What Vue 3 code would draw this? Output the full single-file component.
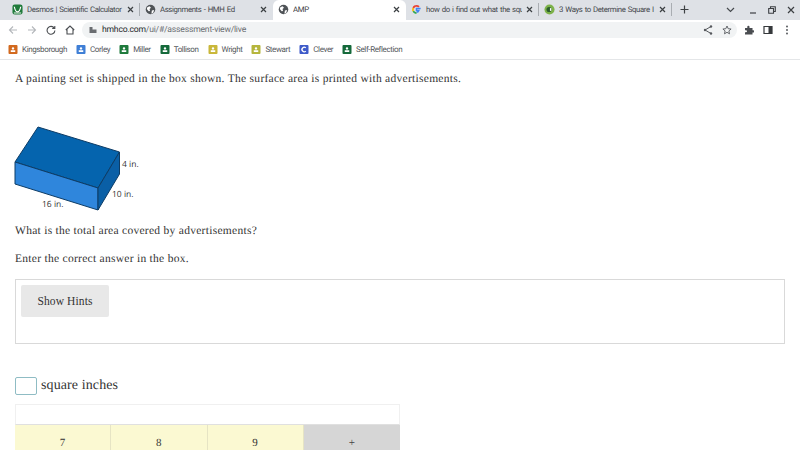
<script setup>
const tabs = [
  { title: 'Desmos | Scientific Calculator', icon: 'desmos', sep: true },
  { title: 'Assignments - HMH Ed', icon: 'globe' },
  { title: 'AMP', icon: 'globe', active: true },
  { title: 'how do i find out what the squ', icon: 'google', sep: true },
  { title: '3 Ways to Determine Square I', icon: 'ways', sep: true },
]

const bookmarks = [
  { name: 'Kingsborough', color: '#d2691e' },
  { name: 'Corley', color: '#3f7fd6' },
  { name: 'Miller', color: '#1e7a3c' },
  { name: 'Tollison', color: '#14693a' },
  { name: 'Wright', color: '#c9b73a' },
  { name: 'Stewart', color: '#b5b53c' },
  { name: 'Clever', color: '#3f5bc9', letter: 'C' },
  { name: 'Self-Reflection', color: '#14693a' },
]

const keys = [
  { label: '7' },
  { label: '8' },
  { label: '9' },
  { label: '+', op: true },
]
</script>

<template>
  <div class="page">
    <div class="tabstrip">
      <div v-for="tab in tabs" :key="tab.title" class="tab" :class="{ active: tab.active, sep: tab.sep }">
        <svg v-if="tab.icon === 'globe'" class="favicon" viewBox="0 0 12 12">
          <circle cx="6" cy="6" r="5.2" fill="#4f5357" />
          <path d="M2.5 3.5 5 2.5 6.5 4 5 5.5 5.5 7.5 4 8 2 5.5ZM7.5 7 10 6.5 9 9.5 7 10.5Z" fill="#fff" />
        </svg>
        <svg v-else-if="tab.icon === 'desmos'" class="favicon" viewBox="0 0 12 12">
          <rect x="0.5" y="0.5" width="11" height="11" rx="2.5" fill="#1f7a3a" />
          <path d="M2.5 3C3.5 8 5 8.5 6 8.5S8.5 8 9.5 3" fill="none" stroke="#fff" stroke-width="1.3" />
          <rect x="2" y="9.3" width="8" height="1" fill="#fff" />
        </svg>
        <svg v-else-if="tab.icon === 'google'" class="favicon" viewBox="0 0 12 12">
          <path d="M10.5 5H6V7H8.6C8.2 8.2 7.2 8.9 6 8.9" fill="none" stroke="#4285f4" stroke-width="1.6" />
          <path d="M6 8.9C4.9 8.9 3.9 8.2 3.3 7.1L1.7 8.3C2.6 9.9 4.2 10.8 6 10.8Z" fill="#34a853" />
          <path d="M3.3 7.1C3 6.3 3 5.6 3.3 4.9L1.7 3.7C1 5.1 1 6.9 1.7 8.3Z" fill="#fbbc05" />
          <path d="M3.3 4.9C3.9 3.7 4.9 3.1 6 3.1 6.8 3.1 7.5 3.4 8 3.8L9.4 2.4C8.5 1.6 7.3 1.2 6 1.2 4.2 1.2 2.6 2.1 1.7 3.7Z" fill="#ea4335" />
        </svg>
        <svg v-else class="favicon" viewBox="0 0 12 12">
          <circle cx="6" cy="6" r="5.5" fill="#7db24a" />
          <circle cx="5.5" cy="6" r="2.8" fill="#2c5e2e" />
          <rect x="6.5" y="4.5" width="1.5" height="3" fill="#fff" />
        </svg>
        <span class="tab-title">{{ tab.title }}</span>
        <svg class="tab-close" width="7" height="7" viewBox="0 0 7 7"><path d="M1 1 6 6M6 1 1 6" stroke="#3c4043" stroke-width="1.2" /></svg>
      </div>
      <svg class="new-tab" width="9" height="9" viewBox="0 0 9 9"><path d="M4.5 .5V8.500M.5 4.500H8.500" stroke="#3c4043" stroke-width="1.2" /></svg>
      <div class="window-btns">
        <svg class="chevron" width="9" height="6" viewBox="0 0 9 6"><path d="M1 1 4.5 4.500 8 1" fill="none" stroke="#45494d" stroke-width="1.2" /></svg>
        <svg width="8" height="8" viewBox="0 0 8 8"><path d="M1 7H7" stroke="#3c3f43" stroke-width="1.2" /></svg>
        <svg width="8" height="8" viewBox="0 0 8 8"><path d="M2.5 2V.7H7.3V5.500H6M.7 2.500H5.500V7.300H.7Z" fill="none" stroke="#3c3f43" stroke-width="1.1" /></svg>
        <svg width="8" height="8" viewBox="0 0 8 8"><path d="M1 1 7 7M7 1 1 7" stroke="#3c3f43" stroke-width="1.2" /></svg>
      </div>
    </div>

    <div class="toolbar">
      <div class="nav-btns">
        <svg width="10" height="10" viewBox="0 0 10 10"><path d="M9 5H1.500M5 1.500 1.500 5 5 8.500" fill="none" stroke="#b4b7bb" stroke-width="1.1" /></svg>
        <svg width="10" height="10" viewBox="0 0 10 10"><path d="M1 5H8.500M5 1.500 8.500 5 5 8.500" fill="none" stroke="#b4b7bb" stroke-width="1.1" /></svg>
        <svg width="10" height="10" viewBox="0 0 10 10"><path d="M8.300 3.200A3.900 3.900 0 1 0 8.900 5.500M8.800 .9V3.500H6.200" fill="none" stroke="#4a4d51" stroke-width="1.1" /></svg>
        <svg width="10" height="10" viewBox="0 0 10 10"><path d="M.8 5 5 1 9.200 5M2 4.300V9H8V4.300" fill="none" stroke="#4a4d51" stroke-width="1.1" /></svg>
      </div>
      <div class="omnibox">
        <svg width="8" height="8" viewBox="0 0 8 8"><path d="M.5 1H3.500V7H.5ZM3.500 3.500H7.500V7H3.500Z" fill="#6a6d71" /></svg>
        <span class="url"><b>hmhco.com</b>/ui/#/assessment-view/live</span>
        <div class="omni-icons">
          <svg width="10" height="10" viewBox="0 0 10 10"><path d="M8 1.500 2 5 8 8.500" fill="none" stroke="#55585c" stroke-width="1" /><circle cx="8" cy="1.500" r="1.200" fill="#55585c" /><circle cx="2" cy="5" r="1.200" fill="#55585c" /><circle cx="8" cy="8.500" r="1.200" fill="#55585c" /></svg>
          <svg width="10" height="10" viewBox="0 0 10 10"><path d="M5 1 6.200 3.700 9.100 4 6.900 5.900 7.500 8.800 5 7.300 2.500 8.800 3.100 5.900 .9 4 3.800 3.700Z" fill="none" stroke="#55585c" stroke-width=".9" /></svg>
        </div>
      </div>
      <div class="tool-icons">
        <svg width="10" height="10" viewBox="0 0 10 10"><path d="M1 3H3.300V1.800A1.100 1.100 0 0 1 5.500 1.800V3H8.500V5.300H9.200A1.100 1.100 0 0 1 9.200 7.500H8.500V9.500H1V7.300H2A1 1 0 0 0 2 5.300H1Z" fill="#4a4d51" /></svg>
        <svg width="10" height="10" viewBox="0 0 10 10"><path d="M1 1.500H9V8.500H1Z" fill="none" stroke="#36393c" stroke-width="1.2" /><rect x="5.500" y="1.500" width="3.500" height="7" fill="#36393c" /></svg>
        <svg width="10" height="10" viewBox="0 0 10 10"><circle cx="5" cy="1.500" r=".9" fill="#4a4d51" /><circle cx="5" cy="5" r=".9" fill="#4a4d51" /><circle cx="5" cy="8.500" r=".9" fill="#4a4d51" /></svg>
      </div>
    </div>

    <div class="bookmarks">
      <div v-for="mark in bookmarks" :key="mark.name" class="bookmark">
        <svg class="mark-icon" viewBox="0 0 10 10">
          <rect width="10" height="10" rx="1" :fill="mark.color" />
          <template v-if="mark.letter">
            <path d="M7 3.200A2.500 2.500 0 1 0 7 6.800" fill="none" stroke="#fff" stroke-width="1.5" />
          </template>
          <template v-else>
            <circle cx="5" cy="3.800" r="1.300" fill="#fff" />
            <rect x="2.500" y="5.800" width="5" height="2" fill="#fff" />
          </template>
        </svg>
        <span>{{ mark.name }}</span>
      </div>
    </div>

    <main class="content">
      <p class="intro">A painting set is shipped in the box shown. The surface area is printed with advertisements.</p>

      <div class="figure">
        <svg width="130" height="92" viewBox="0 0 130 92">
          <path d="M15 42 38 7 119.500 32 98 68Z" fill="#0564ae" stroke="#0d3c66" stroke-width="1" stroke-linejoin="round" />
          <path d="M15 42 98 68V90L15 64Z" fill="#2f86dc" stroke="#0d3c66" stroke-width="1" stroke-linejoin="round" />
          <path d="M98 68 119.500 32V54L98 90Z" fill="#0a5fa6" stroke="#0d3c66" stroke-width="1" stroke-linejoin="round" />
        </svg>
        <span class="dim dim-h">4 in.</span>
        <span class="dim dim-d">10 in.</span>
        <span class="dim dim-w">16 in.</span>
      </div>

      <p class="question">What is the total area covered by advertisements?</p>
      <p class="prompt">Enter the correct answer in the box.</p>

      <div class="hints">
        <button class="hint-btn">Show Hints</button>
      </div>

      <div class="answer">
        <span class="answer-box"></span>
        <span>square inches</span>
      </div>

      <div class="keypad">
        <div class="display"></div>
        <div class="keys">
          <div v-for="key in keys" :key="key.label" class="key" :class="{ op: key.op }">{{ key.label }}</div>
        </div>
      </div>
    </main>
  </div>
</template>

<style>
html,
body {
  margin: 0;
  overflow: hidden;
  background: #fff;
}
</style>

<style scoped>
.page {
  width: 800px;
  height: 450px;
  overflow: hidden;
  font-family: 'Roboto', 'Liberation Sans', sans-serif;
  text-rendering: geometricPrecision;
}
.tabstrip {
  height: 20px;
  background: #dee1e6;
  display: flex;
  align-items: center;
  padding-left: 7px;
  box-sizing: border-box;
}
.tab {
  width: 133px;
  height: 20px;
  display: flex;
  align-items: center;
  gap: 4px;
  padding: 0 5px 1px;
  box-sizing: border-box;
  font-size: 7.8px;
  letter-spacing: -0.38px;
  word-spacing: 0.7px;
  color: #45484c;
  position: relative;
  flex: none;
}
.tab.active {
  background: #fff;
  border-radius: 6px 6px 0 0;
  color: #3c4043;
}
.tab.sep::after {
  content: '';
  position: absolute;
  right: 0;
  top: 3px;
  height: 13px;
  width: 1px;
  background: #a9adb2;
}
.favicon {
  width: 11px;
  height: 11px;
  flex: none;
}
.tab-title {
  flex: 1;
  white-space: nowrap;
  overflow: hidden;
  min-width: 0;
}
.tab-close {
  flex: none;
  margin-right: 1px;
}
.new-tab {
  margin: 0 0 1px 8px;
  flex: none;
}
.window-btns {
  margin-left: auto;
  height: 18px;
  display: flex;
  align-items: center;
  gap: 11px;
  padding-right: 5px;
}
.chevron {
  margin-right: 3px;
}
.toolbar {
  height: 19px;
  padding-top: 1px;
  box-sizing: border-box;
  display: flex;
  align-items: center;
  background: #fff;
}
.nav-btns {
  width: 82px;
  flex: none;
  display: flex;
  gap: 9px;
  padding-left: 8px;
  box-sizing: border-box;
}
.omnibox {
  width: 655px;
  height: 16px;
  flex: none;
  background: #f1f3f4;
  border-radius: 8px;
  display: flex;
  align-items: center;
  padding: 0 5px 0 7px;
  box-sizing: border-box;
  gap: 5px;
}
.url {
  font-size: 8.6px;
  letter-spacing: -0.2px;
  color: #6a6d71;
}
.url b {
  font-weight: 400;
  color: #26282b;
}
.omni-icons {
  margin-left: auto;
  display: flex;
  gap: 9px;
}
.tool-icons {
  display: flex;
  gap: 9px;
  padding-left: 7px;
}
.bookmarks {
  height: 21px;
  display: flex;
  align-items: center;
  gap: 9px;
  padding-left: 8px;
  border-bottom: 1px solid #e4e6e8;
  box-sizing: border-box;
  font-size: 8px;
  letter-spacing: -0.38px;
  color: #55585c;
}
.bookmark {
  display: flex;
  align-items: center;
  gap: 4px;
}
.mark-icon {
  width: 10px;
  height: 9px;
}
.content {
  padding: 11px 15px 0;
  font-family: 'Liberation Serif', serif;
  font-size: 11.5px;
  color: #333;
  letter-spacing: 0.28px;
}
.content p {
  margin: 0;
  line-height: 16px;
}
.figure {
  position: relative;
  height: 92px;
  margin: 33px 0 0 -15px;
}
.figure svg {
  display: block;
}
.dim {
  position: absolute;
  font-family: 'Open Sans', 'Liberation Sans', sans-serif;
  font-size: 8.5px;
  line-height: 10px;
  letter-spacing: 0;
  color: #333;
}
.dim-h { left: 122px; top: 40px; }
.dim-d { left: 112px; top: 70px; }
.dim-w { left: 42px; top: 80px; }
.content .question {
  margin-top: 11px;
}
.content .prompt {
  margin-top: 12px;
}
.hints {
  margin-top: 12px;
  height: 65px;
  border: 1px solid #d9d9d9;
  box-sizing: border-box;
  padding: 5px 5px;
}
.hint-btn {
  display: block;
  width: 88px;
  height: 32px;
  border: none;
  border-radius: 2px;
  background: #e8e8e8;
  font-family: inherit;
  font-size: 11.5px;
  letter-spacing: 0.1px;
  color: #333;
  padding: 0;
}
.answer {
  margin-top: 32px;
  display: flex;
  align-items: center;
  gap: 4px;
  font-size: 14px;
  letter-spacing: 0.1px;
  height: 19px;
}
.answer-box {
  width: 20px;
  height: 16px;
  border: 1px solid #8fbcc4;
  border-radius: 2px;
  flex: none;
}
.keypad {
  margin-top: 9px;
  width: 385px;
}
.display {
  height: 21px;
  border: 1px solid #f0f0f0;
  border-bottom-color: #e0e0e0;
  box-sizing: border-box;
}
.keys {
  display: grid;
  grid-template-columns: repeat(4, 1fr);
  height: 40px;
}
.key {
  background: #fbf9d2;
  border-right: 1px solid #e6e4c4;
  text-align: center;
  padding-top: 11px;
  font-size: 11px;
  line-height: 14px;
  box-sizing: border-box;
}
.key.op {
  background: #d6d6d6;
  border-right: none;
  color: #444;
}
</style>
